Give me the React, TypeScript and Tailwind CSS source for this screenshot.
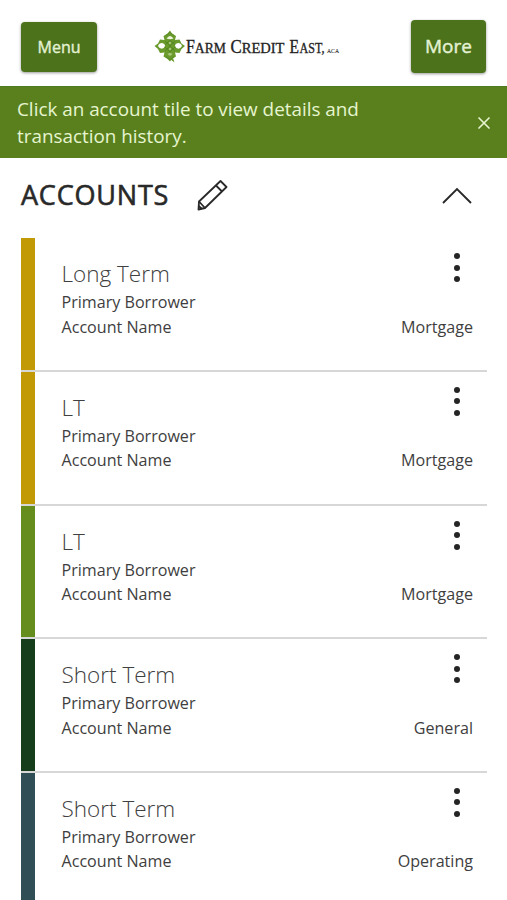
import { X } from 'lucide-react';

type Account = {
  name: string;
  kind: string;
  color: string;
};

const accounts: Account[] = [
  { name: 'Long Term', kind: 'Mortgage', color: 'bg-[#c19a06]' },
  { name: 'LT', kind: 'Mortgage', color: 'bg-[#c19a06]' },
  { name: 'LT', kind: 'Mortgage', color: 'bg-[#658d1e]' },
  { name: 'Short Term', kind: 'General', color: 'bg-[#173e1b]' },
  { name: 'Short Term', kind: 'Operating', color: 'bg-[#304e55]' },
];

function Logo() {
  return (
    <svg width="188" height="36" viewBox="0 0 188 36" role="img" aria-label="Farm Credit East, ACA">
      {/* Woven clover mark */}
      <g fill="#6a9a2c">
        <path d="M17 1.5 L19 4.5 L23 7 L22 11 L26.5 10.5 L28.5 14.5 L32 17 L28.5 20 L26.5 24 L22 23.5 L23 27.5 L19 30 L17 32.5 L14.5 30 L10.5 27.5 L11.5 23.5 L7 24 L5 20 L1.5 17 L5 14.5 L7 10.5 L11.5 11 L10.5 7 L14.5 4.5 Z" />
        <path d="M17 30 L21.5 33.5 L20 29 Z" />
      </g>
      <g fill="none" stroke="#4f8423" strokeWidth="0.7">
        <path d="M12 12 L22 22 M22 12 L12 22 M11 17 L17 11 L23 17 L17 23 Z" />
        <path d="M13 6.5 L17 3.5 L21 6.5 M13 27.5 L17 30.5 L21 27.5" />
      </g>
      <g fill="#fff">
        <path d="M13.5 9.5 Q17 4.5 20.5 9.5 Q17 11 13.5 9.5 Z" fill="#edf4df" />
        <path d="M5 17 Q6 14 9 14 Q12 14.5 12 17 Q11 19.8 8.5 19.8 Q6 19 5 17 Z" />
        <path d="M22 17 Q22 14.5 25 14 Q28 14 29 17 Q28 19 25.5 19.8 Q23 19.5 22 17 Z" />
        <path d="M14.5 25 Q17 23 19.5 25 Q17 28.5 14.5 25 Z" fill="#a9c67c" />
        <path d="M16 14 L17 13 L18 14 L17 15 Z M16 20 L17 19 L18 20 L17 21 Z" fill="#dbe9c3" />
      </g>
      <g fill="#242424" fontFamily="'Liberation Serif', serif" stroke="#242424" strokeWidth="0.35">
        <text x="33" y="23.5" fontSize="18" textLength="40" lengthAdjust="spacingAndGlyphs">
          F<tspan fontSize="15.5">ARM</tspan>
        </text>
        <text x="77.5" y="23.5" fontSize="18" textLength="54" lengthAdjust="spacingAndGlyphs">
          C<tspan fontSize="15.5">REDIT</tspan>
        </text>
        <text x="136.5" y="23.5" fontSize="18" textLength="9.5" lengthAdjust="spacingAndGlyphs">E</text>
        <text x="146.5" y="23.5" fontSize="15.5" textLength="25" lengthAdjust="spacingAndGlyphs">AST,</text>
        <text x="174" y="23.5" fontSize="7" strokeWidth="0.1" textLength="12" lengthAdjust="spacingAndGlyphs">ACA</text>
      </g>
    </svg>
  );
}

function Pencil() {
  return (
    <svg width="32" height="32" viewBox="0 0 32 32" fill="none" stroke="#292929" strokeWidth="1.8" strokeLinejoin="round">
      <path d="M1.5 29.5 L2 21.5 L23.5 1 L29.5 7 L8 28 Z" />
      <path d="M19 5.5 L25 11.5 M2 21.5 L8 28 M1.7 26 L4.8 28.7" />
    </svg>
  );
}

function AccountTile({ account }: { account: Account }) {
  return (
    <li className="flex h-[133.6px] shrink-0 border-b-2 border-[#d7d7d7]">
      <div className={`w-3.5 shrink-0 ${account.color}`} />
      <div className="flex grow flex-col pl-[26.5px] pt-[20px] text-[#3e3e3e]">
        <div className="flex justify-between">
          <h3 className="text-[22.5px] leading-[32px] font-light text-[#404040]">{account.name}</h3>
          <button className="mr-[27px] -mt-[5px] flex h-[29px] flex-col justify-between" aria-label="Account options">
            <span className="size-[6px] rounded-full bg-[#252525]" />
            <span className="size-[6px] rounded-full bg-[#252525]" />
            <span className="size-[6px] rounded-full bg-[#252525]" />
          </button>
        </div>
        <p className="text-[16.1px] leading-[24.5px]">Primary Borrower</p>
        <div className="flex justify-between pr-3.5 text-[16.1px] leading-[24.5px]">
          <span>Account Name</span>
          <span>{account.kind}</span>
        </div>
      </div>
    </li>
  );
}

export default function App() {
  return (
    <div className="flex h-[900px] w-[507px] flex-col overflow-hidden bg-white font-['Open_Sans',sans-serif]">
      <header className="flex h-[86px] shrink-0 items-start pl-[21px] pr-[21px]">
        <button className="mt-[22px] h-[50px] w-[76px] rounded-[4px] bg-[#4c721b] text-base font-medium text-[#e3f1d3] shadow-[0_1px_3px_#00000066] [-webkit-text-stroke:0.4px]">
          Menu
        </button>
        <div className="mt-[29px] ml-[56px]">
          <Logo />
        </div>
        <button className="mt-[20px] ml-auto h-[53px] w-[75px] rounded-[4px] bg-[#4c721b] text-[19px] font-medium text-[#e3f1d3] shadow-[0_1px_3px_#00000066] [-webkit-text-stroke:0.45px]">
          More
        </button>
      </header>

      <div className="flex h-[72.4px] shrink-0 items-start justify-between border-t border-[#507a1e] bg-[#5a801e] pl-[17px] pr-[13px] text-[#e6f5cf]">
        <p className="w-[360px] pt-[9px] text-[18.85px] leading-[27px]">
          Click an account tile to view details and transaction history.
        </p>
        <X className="mt-[26px] size-5" strokeWidth={2} />
      </div>

      <div className="flex h-[80px] shrink-0 items-start pt-px pl-[21px] pr-[35px]">
        <h2 className="w-[176px] pt-[16px] text-[27px] leading-[40px] font-medium tracking-[0.8px] text-[#292929] [-webkit-text-stroke:0.6px]">
          ACCOUNTS
        </h2>
        <button className="mt-[21px]" aria-label="Edit accounts">
          <Pencil />
        </button>
        <button className="mt-[28px] ml-auto" aria-label="Collapse accounts">
          <svg width="30" height="18" viewBox="0 0 30 18" fill="none" stroke="#292929" strokeWidth="1.9">
            <path d="M1 16 L15 2 L29 16" />
          </svg>
        </button>
      </div>

      <ul className="flex flex-col pl-[21px] pr-5">
        {accounts.map((account, i) => (
          <AccountTile key={i} account={account} />
        ))}
      </ul>
    </div>
  );
}
